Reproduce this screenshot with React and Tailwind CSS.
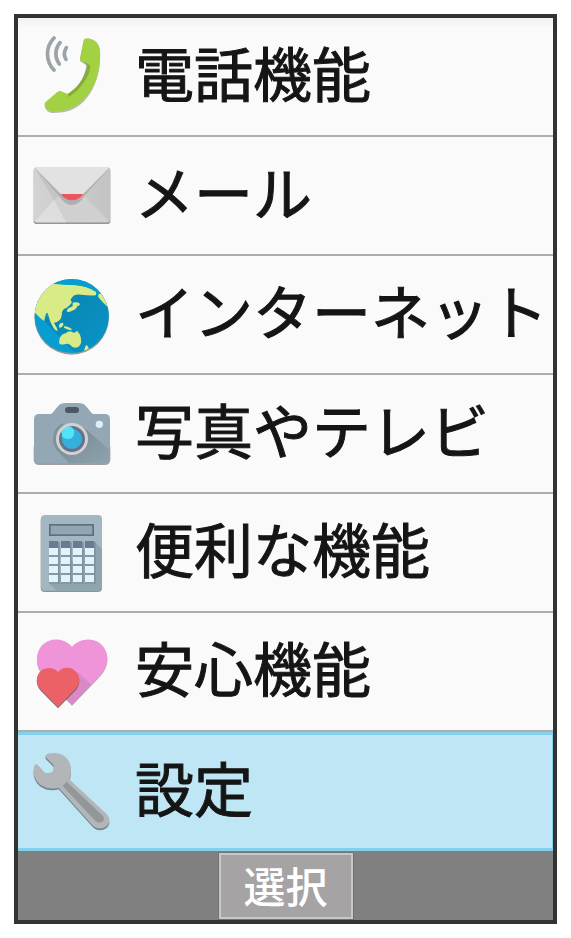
import React from "react";

const iconClass = "h-[81px] w-[81px] shrink-0";

function PhoneIcon() {
  return (
    <svg className={iconClass} viewBox="96 108 243 243" aria-hidden="true">
      <g fill="none" stroke="#9aa3a8" strokeWidth="11" strokeLinecap="round">
        <path d="M162 114C136 140 136 184 162 210" />
        <path d="M180 128C164 146 164 174 178 192" />
        <path d="M199 143C192 154 192 168 198 178" />
      </g>
      <path d="M252 121C254 117 260 115 268 116C284 118 298 130 300 152C304 220 282 282 238 316C216 334 186 340 156 339C144 338 134 328 134 316C134 313 135 311 137 308L172 278C176 274 183 274 187 277L204 284C230 268 254 236 259 196L242 185C239 181 240 176 241 172Z" fill="#8a9488" opacity=".6" />
      <path d="M251 120C253 116 260 115 268 116C286 119 298 132 300 152C303 216 282 278 236 312C214 328 186 335 156 335C142 334 134 323 134 312C134 309 135 308 137 306L172 276C176 273 183 272 187 275L204 282C232 266 262 232 267 196C264 190 252 188 243 183C239 180 240 175 241 170Z" fill="#a2d144" />
      <path d="M249 185C256 188 266 189 271 199C269 232 240 270 206 291L203 282C230 265 254 237 261 199C260 193 255 189 249 185Z" fill="#7fa72f" opacity=".85" />
    </svg>
  );
}

function MailIcon() {
  return (
    <svg className={iconClass} viewBox="96 60 243 243" aria-hidden="true">
      <defs>
        <linearGradient id="mailBody" x1="0" y1="0" x2="1" y2="0">
          <stop offset="0" stopColor="#d3d3d3" />
          <stop offset="1" stopColor="#c3c3c3" />
        </linearGradient>
      </defs>
      <rect x="101" y="99" width="230" height="168" rx="8" fill="#969696" />
      <rect x="102" y="97" width="228" height="165" rx="8" fill="url(#mailBody)" />
      <path d="M105 259L174 186H256L327 259Q325 262 320 262H112Q107 262 105 259Z" fill="#d0d0d0" />
      <path d="M105 259L162 195L198 262H112Q107 262 105 259Z" fill="#dedede" />
      <path d="M104 100L176 182Q196 210 216 210Q236 210 254 182L328 100L320 97H112Z" fill="#b0b0b0" />
      <path d="M104 100L162 195L176 183Z" fill="#c4c4c4" />
      <path d="M105 99Q108 96 113 96H319Q324 96 327 99L249 178H183Z" fill="#e2e2e2" />
      <path d="M182 177H250Q235 196 216 196Q197 196 182 177Z" fill="#eb5560" />
    </svg>
  );
}

function GlobeIcon() {
  return (
    <svg className={iconClass} viewBox="96 57 243 243" aria-hidden="true">
      <defs>
        <clipPath id="globeClip">
          <circle cx="215" cy="183" r="111" />
        </clipPath>
        <linearGradient id="globeShade" x1="0" y1="0" x2="1" y2="1">
          <stop offset="0" stopColor="#0a82b0" />
          <stop offset="1" stopColor="#0896c8" />
        </linearGradient>
      </defs>
      <circle cx="215" cy="187" r="112" fill="#777777" opacity=".75" />
      <circle cx="215" cy="183" r="111" fill="#069dd0" />
      <g clipPath="url(#globeClip)">
        <path d="M130 195L230 300H330V120H290L220 115Z" fill="url(#globeShade)" />
        <path d="M100 60V190L106 174Q122 192 133 198Q134 184 139 174L143 174Q148 198 160 218Q166 228 172 228Q174 222 165 209L162 203Q176 202 183 190Q186 180 186 172Q188 162 200 158Q212 150 216 142Q208 134 216 128Q222 116 244 119Q266 122 286 121Q291 117 286 110Q260 94 222 91Q188 90 158 87L160 60Z" fill="#d9eb87" />
        <path d="M158 60H300V106Q260 92 222 91Q188 90 158 87Z" fill="#069dd0" />
        <path d="M158 87Q188 90 222 91Q260 94 286 110Q291 117 286 121L230 116L170 100Z" fill="#d9eb87" />
        <path d="M218 149Q216 142 225 142Q237 141 240 147Q239 153 232 153Q229 164 216 167Q204 174 200 169Q202 159 213 156Q220 154 218 149Z" fill="#d9eb87" />
        <path d="M300 116Q292 117 295 126Q305 140 326 158L334 120Z" fill="#d9eb87" />
        <path d="M177 210Q181 203 187 203Q193 205 188 213Q183 220 177 217Z" fill="#d9eb87" />
        <path d="M192 214Q201 213 212 220Q218 223 214 226Q203 225 192 218Z" fill="#d9eb87" />
        <path d="M179 249Q185 237 197 235Q206 226 216 230Q223 237 231 227Q242 238 243 252Q246 268 233 277Q218 281 211 270Q202 264 193 268Q180 271 177 263Z" fill="#d9eb87" />
        <path d="M252 288Q253 275 260 269Q266 275 268 286L256 297Z" fill="#d9eb87" />
      </g>
    </svg>
  );
}

function CameraIcon() {
  return (
    <svg className={iconClass} viewBox="96 54 243 243" aria-hidden="true">
      <defs>
        <linearGradient id="cameraShade" x1="0" y1="0" x2="1" y2="1">
          <stop offset="0" stopColor="#74868d" />
          <stop offset="1" stopColor="#8ea3b0" />
        </linearGradient>
      </defs>
      <rect x="101" y="200" width="230" height="70" rx="16" fill="#a69b9d" />
      <path d="M118 117H151Q156 117 159 112L174 94Q182 84 196 84H236Q250 84 258 94L273 112Q276 117 281 117H314Q330 117 330 133V250Q330 265 314 265H118Q102 265 102 250V133Q102 117 118 117Z" fill="#93a8b4" />
      <path d="M250 157L330 226V250Q330 265 314 265H208L167 222Z" fill="url(#cameraShade)" />
      <path d="M190 144Q160 155 159 194Q160 213 170 224L196 220Z" fill="#7f929b" />
      <rect x="195" y="96" width="42" height="18" rx="9" fill="#4a5866" />
      <circle cx="298" cy="148" r="11" fill="#daf1fc" />
      <circle cx="216" cy="192" r="48" fill="#d0d3d4" />
      <circle cx="216" cy="192" r="39" fill="#64738a" />
      <circle cx="216" cy="192" r="30" fill="#37afdc" />
      <path d="M186 190Q183 168 197 156Q213 148 222 165Q227 188 207 192Q194 193 187 185Z" fill="#50e4f4" />
      <path d="M180 170Q190 153 210 153Q196 156 188 167L186 174Z" fill="#b8d0d8" />
    </svg>
  );
}

const keyColumns = [147, 183, 219, 255];
const keyRows = [159, 186, 213, 240];

function CalculatorIcon() {
  return (
    <svg className={iconClass} viewBox="96 51 243 243" aria-hidden="true">
      <rect x="122" y="64" width="184" height="227" rx="12" fill="#968f91" />
      <rect x="123" y="60" width="183" height="227" rx="12" fill="#a3b7c2" />
      <path d="M282 138L306 162V275Q306 287 294 287H170L147 264Z" fill="#8ea5b0" />
      <rect x="147" y="87" width="135" height="36" fill="#5e6f7f" />
      <rect x="152" y="92" width="125" height="26" fill="#91a6b1" />
      {keyColumns.map((x) => (
        <g key={x}>
          <rect x={x + 5} y="141" width="27" height="126" fill="#7d929e" />
          <rect x={x} y="138" width="27" height="21" fill="#6b7a8e" />
          {keyRows.map((y) => (
            <g key={y}>
              <rect x={x} y={y} width="27" height="27" fill="#8499a5" />
              <rect x={x} y={y} width="27" height="21" fill="#e2f3fc" />
            </g>
          ))}
        </g>
      ))}
    </svg>
  );
}

function HeartsIcon() {
  const big =
    "M216 101C234 80 270 71 298 89C325 108 330 148 310 175Q304 184 294 194L216 275L128 184C106 160 105 122 126 97C151 72 193 75 216 101Z";
  const small =
    "M174 177C184 164 206 160 221 170C240 182 243 207 230 224Q227 228 222 233L174 282L122 229C105 211 108 186 123 173C139 160 163 163 174 177Z";
  return (
    <svg className={iconClass} viewBox="96 54 243 243" aria-hidden="true">
      <path d={big} fill="#8d7d89" opacity=".7" transform="translate(0 3)" />
      <path d={big} fill="#f094da" />
      <path d="M233 177L274 215L216 275L190 250Z" fill="#da88c8" />
      <path d={small} fill="#5c4a4c" opacity=".8" transform="translate(0 4)" />
      <path d={small} fill="#ec6168" />
    </svg>
  );
}

function WrenchIcon() {
  const body =
    "M138 80Q145 75 164 75C194 76 214 98 213 130Q213 144 207 153L319 257Q329 267 328 280C325 297 304 308 286 298Q280 295 276 290L176 179C146 188 111 175 102 142Q99 123 104 112Q106 107 111 109L135 134Q146 137 157 132Q163 122 161 112L137 88Q135 84 138 80Z";
  return (
    <svg className={iconClass} viewBox="96 69 243 243" aria-hidden="true">
      <path d={body} fill="#71838b" transform="translate(0 5)" />
      <path d={body} fill="#b2b6b8" />
      <path d="M200 161L306 261Q315 270 310 279Q299 289 287 280L188 174Z" fill="#929799" />
    </svg>
  );
}

const items = [
  { label: "電話機能", Icon: PhoneIcon },
  { label: "メール", Icon: MailIcon },
  { label: "インターネット", Icon: GlobeIcon },
  { label: "写真やテレビ", Icon: CameraIcon },
  { label: "便利な機能", Icon: CalculatorIcon },
  { label: "安心機能", Icon: HeartsIcon },
  { label: "設定", Icon: WrenchIcon, selected: true },
];

const rowClass =
  "flex h-[119px] w-full items-center gap-[22px] overflow-hidden pl-[14px] text-left";

export default function App() {
  return (
    <div className="bg-white p-[14px] font-['Noto_Sans_CJK_JP',sans-serif]">
      <main className="border-4 border-[#333333] bg-[#fafafa]">
        <ul className="bg-linear-to-b from-[#f0f0f0] to-[#fafafa] to-[10px]">
          {items.map(({ label, Icon, selected }) => (
            <li key={label}>
              <button
                type="button"
                aria-current={selected ? "true" : undefined}
                className={
                  selected
                    ? `${rowClass} border-y-3 border-r border-[#83d0ee] bg-[#bee6f5]`
                    : `${rowClass} border-b-2 border-[#adadad]`
                }
              >
                <Icon />
                <span className="pb-[10px] text-[59px] leading-[80px] font-normal whitespace-nowrap text-[#151515] [-webkit-text-stroke:1px_#151515]">
                  {label}
                </span>
              </button>
            </li>
          ))}
        </ul>
        <footer className="flex h-[69px] items-center justify-center bg-[#808080]">
          <button
            type="button"
            className="flex h-[66px] w-[134px] items-center justify-center border-2 border-[#c8c8c8] bg-[#a5a3a4] pb-[2px] text-[42px] leading-[60px] font-medium text-white outline outline-[#737373]"
          >
            選択
          </button>
        </footer>
      </main>
    </div>
  );
}
